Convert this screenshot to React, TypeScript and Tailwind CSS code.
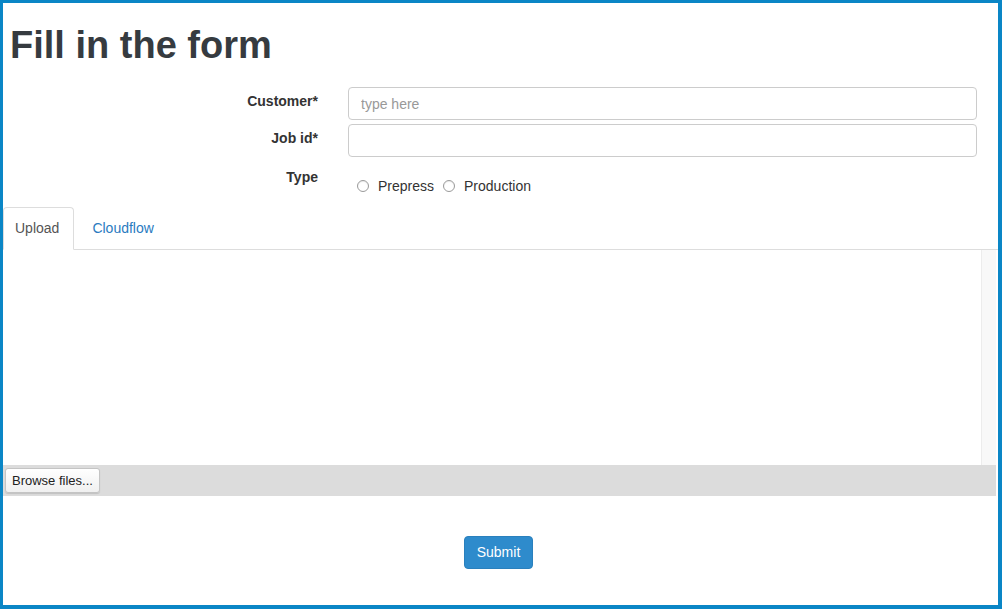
import React from "react";

// Job submission form: title, three fields, tabbed upload area and submit.

const font = { fontFamily: '"Liberation Sans", Arial, Helvetica, sans-serif' };

function Radio({ label }: { label: string }) {
  return (
    <label className="flex items-center gap-[9px] text-[14px] leading-5 text-[#333]">
      <span className="inline-block h-[12px] w-[12px] rounded-full border border-[#9a9a9a] bg-white shadow-[inset_0_1px_1px_rgba(0,0,0,0.08)]" />
      <span>{label}</span>
    </label>
  );
}

function FieldRow({
  label,
  children,
  className = "",
}: {
  label: string;
  children: React.ReactNode;
  className?: string;
}) {
  return (
    <div className={`flex ${className}`}>
      <div className="w-[315px] pt-[4px] text-right text-[14px] font-bold leading-5 text-[#333]">
        {label}
      </div>
      <div className="ml-[30px] w-[629px]">{children}</div>
    </div>
  );
}

export default function App() {
  return (
    <div
      style={font}
      className="flex h-[609px] w-[1002px] flex-col border-t-[3px] border-r-4 border-b-4 border-l-[3px] border-[#0a86c6] bg-white"
    >
      {/* Title */}
      <h1 className="mt-[21px] pl-[7px] text-[38px] font-bold leading-[42px] text-[#363b40]">
        Fill in the form
      </h1>

      {/* Fields */}
      <div className="mt-[21px] flex flex-col">
        <FieldRow label="Customer*">
          <input
            placeholder="type here"
            className="h-[33px] w-full rounded-[4px] border border-[#cccccc] px-[12px] text-[14px] text-[#555] outline-none placeholder:text-[#999]"
          />
        </FieldRow>
        <FieldRow label="Job id*" className="mt-[4px]">
          <input className="h-[33px] w-full rounded-[4px] border border-[#cccccc] px-[12px] text-[14px] text-[#555] outline-none" />
        </FieldRow>
        <FieldRow label="Type" className="mt-[6px]">
          <div className="mt-[13px] flex items-center gap-[9px] pl-[9px]">
            <Radio label="Prepress" />
            <Radio label="Production" />
          </div>
        </FieldRow>
      </div>

      {/* Tabs */}
      <div className="mt-[11px] flex border-b border-[#dddddd]">
        <div className="-mb-px rounded-t-[4px] border border-b-white border-[#dddddd] bg-white py-[10px] pr-[14px] pl-[11px] text-[14px] leading-5 text-[#555]">
          Upload
        </div>
        <div className="ml-[2px] border border-transparent py-[10px] px-[15px] text-[14px] leading-5 text-[#2a7bbf]">
          Cloudflow
        </div>
      </div>

      {/* Upload area */}
      <div className="mr-[2px] flex flex-col">
        <div className="flex h-[215px]">
          <div className="flex-1" />
          <div className="w-[15px] border-l border-[#ececec] bg-[#f8f8f8]" />
        </div>
        <div className="flex h-[31px] items-center bg-[#dcdcdc] pl-[2px]">
          <button className="h-[25px] rounded-[3px] border border-[#c4c4c4] bg-gradient-to-b from-white to-[#f0f0f0] px-[6px] text-[13px] leading-4 text-[#222] shadow-[0_1px_1px_rgba(0,0,0,0.12)]">
            Browse files...
          </button>
        </div>
      </div>

      {/* Submit */}
      <div className="mt-[40px] flex justify-center pr-[4px]">
        <button className="h-[33px] w-[69px] rounded-[4px] border border-[#2a80bd] bg-[#2e8bcc] text-[14px] text-white">
          Submit
        </button>
      </div>
    </div>
  );
}
